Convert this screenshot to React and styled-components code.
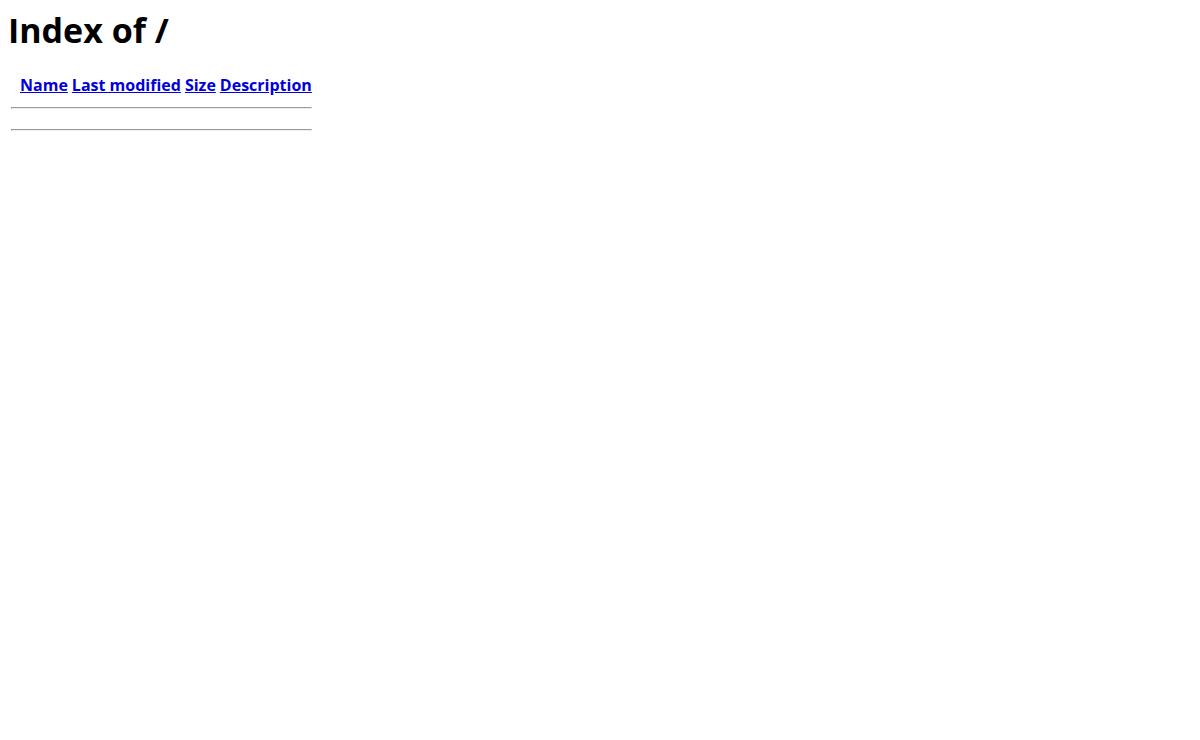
import React from "react";
import styled, { createGlobalStyle } from "styled-components";

const GlobalStyle = createGlobalStyle`
  body {
    margin: 8px;
    background: #fff;
    color: #000;
    font-family: "Open Sans", "Noto Sans", sans-serif;
    font-size: 16px;
  }
`;

const Title = styled.h1`
  margin: 0 0 20px;
  font-size: 34px;
  line-height: 44px;
  font-weight: 700;
`;

const Listing = styled.table`
  border-spacing: 2px;
`;

const HeadCell = styled.th`
  padding: 1px;
  font-weight: 700;
  line-height: 20px;
  white-space: nowrap;
`;

const IconCell = styled(HeadCell)`
  width: 5px;
`;

const SortLink = styled.a`
  color: #0000dd;
  text-decoration: underline;
`;

const RuleCell = styled.th`
  padding: 1px;
`;

const Rule = styled.hr`
  margin: 8px 0;
`;

const columns = [
  { label: "Name", href: "?C=N;O=D" },
  { label: "Last modified", href: "?C=M;O=A" },
  { label: "Size", href: "?C=S;O=A" },
  { label: "Description", href: "?C=D;O=A" },
];

const RuleRow = () => (
  <tr>
    <RuleCell colSpan={columns.length + 1}>
      <Rule />
    </RuleCell>
  </tr>
);

const App = () => {
  return (
    <>
      <GlobalStyle />
      <Title>Index of /</Title>
      <Listing>
        <tbody>
          <tr>
            <IconCell />
            {columns.map((column) => (
              <HeadCell key={column.label}>
                <SortLink href={column.href}>{column.label}</SortLink>
              </HeadCell>
            ))}
          </tr>
          <RuleRow />
          <RuleRow />
        </tbody>
      </Listing>
    </>
  );
};

export default App;
